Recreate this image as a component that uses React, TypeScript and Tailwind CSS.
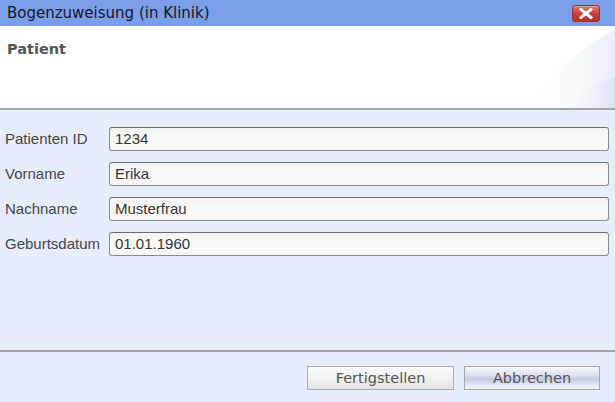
import React from 'react';

const FIELDS = [
  { label: 'Patienten ID', value: '1234' },
  { label: 'Vorname', value: 'Erika' },
  { label: 'Nachname', value: 'Musterfrau' },
  { label: 'Geburtsdatum', value: '01.01.1960' },
];

const CloseButton: React.FC = () => (
  <button className="w-[28px] h-[17px] rounded-[3px] border border-[#9c2f2a] bg-[linear-gradient(#e4746c,#c83f37_55%,#b8322b)] flex items-center justify-center shadow-[inset_0_1px_0_rgba(255,255,255,0.35)]">
    <svg width="14" height="11" viewBox="0 0 14 11">
      <path d="M2 1.5 L12 9.5 M12 1.5 L2 9.5" stroke="#7a2520" strokeWidth="3.4" strokeLinecap="square" transform="translate(0.4,0.6)" opacity="0.5" />
      <path d="M2 1.5 L12 9.5 M12 1.5 L2 9.5" stroke="#ffffff" strokeWidth="3" strokeLinecap="square" />
    </svg>
  </button>
);

export default function App() {
  return (
    <div className="w-[615px] h-[402px] flex flex-col bg-[#e6eefd] overflow-hidden">
      {/* Title bar */}
      <div className="h-[26px] shrink-0 bg-[#7b9ee9] flex items-center justify-between pl-[7px] pr-[15px]">
        <span className="font-['DejaVu_Sans',sans-serif] text-[15px] text-[#15172a] leading-none">
          Bogenzuweisung (in Klinik)
        </span>
        <CloseButton />
      </div>

      {/* Header */}
      <div className="relative h-[82px] shrink-0 bg-white pl-[7px] pt-[10px] overflow-hidden">
        <svg className="absolute right-0 bottom-0" width="200" height="82" viewBox="0 0 200 82">
          <defs>
            <linearGradient id="sw1" x1="0" y1="0" x2="1" y2="0">
              <stop offset="0" stopColor="#ffffff" stopOpacity="0" />
              <stop offset="1" stopColor="#e8edfa" />
            </linearGradient>
            <linearGradient id="sw2" x1="0" y1="0" x2="1" y2="0">
              <stop offset="0" stopColor="#ffffff" stopOpacity="0" />
              <stop offset="1" stopColor="#d9e2f6" />
            </linearGradient>
          </defs>
          <path d="M110 82 C135 50 165 20 200 4 L200 82 Z" fill="url(#sw1)" />
          <path d="M147 82 C162 68 180 57 200 51 L200 82 Z" fill="url(#sw2)" />
        </svg>
        <span className="relative font-['DejaVu_Sans',sans-serif] font-bold text-[14.5px] text-[#555555]">
          Patient
        </span>
      </div>
      <div className="h-[2px] shrink-0 bg-[#a3a3a3]" />

      {/* Form */}
      <div className="h-[240px] shrink-0 flex flex-col gap-[11px] pt-[17px] pr-[6px]">
        {FIELDS.map((f) => (
          <div key={f.label} className="flex items-center h-[24px]">
            <label className="w-[109px] shrink-0 pl-[5px] font-['Liberation_Sans',Arial,sans-serif] text-[15px] text-[#454545]">
              {f.label}
            </label>
            <div className="flex-1 h-[24px] rounded-[3px] border border-[#8a8a8a] border-t-[#6e6e6e] bg-[linear-gradient(#f2f2f2,#fafafa_40%,#f7f7f7)] flex items-center pl-[5px] font-['Liberation_Sans',Arial,sans-serif] text-[15px] text-[#333333]">
              {f.value}
            </div>
          </div>
        ))}
      </div>
      <div className="h-[2px] shrink-0 bg-[#a3a3a3]" />

      {/* Footer */}
      <div className="flex justify-end gap-[10px] pt-[14px] pr-[15px]">
        <button className="w-[147px] h-[24px] border border-[#a9a9a9] bg-[linear-gradient(#fdfdfd,#f1f1f1_50%,#e3e3e3)] font-['DejaVu_Sans',sans-serif] text-[14.5px] text-[#555555] leading-none">
          Fertigstellen
        </button>
        <button className="w-[136px] h-[24px] border border-[#a9a9a9] bg-[linear-gradient(#f7f8fb,#dfe3ef_35%,#c3cbe2_55%,#e2e6f1_80%,#f3f4f8)] font-['DejaVu_Sans',sans-serif] text-[14.5px] text-[#555555] leading-none">
          Abbrechen
        </button>
      </div>
    </div>
  );
}
